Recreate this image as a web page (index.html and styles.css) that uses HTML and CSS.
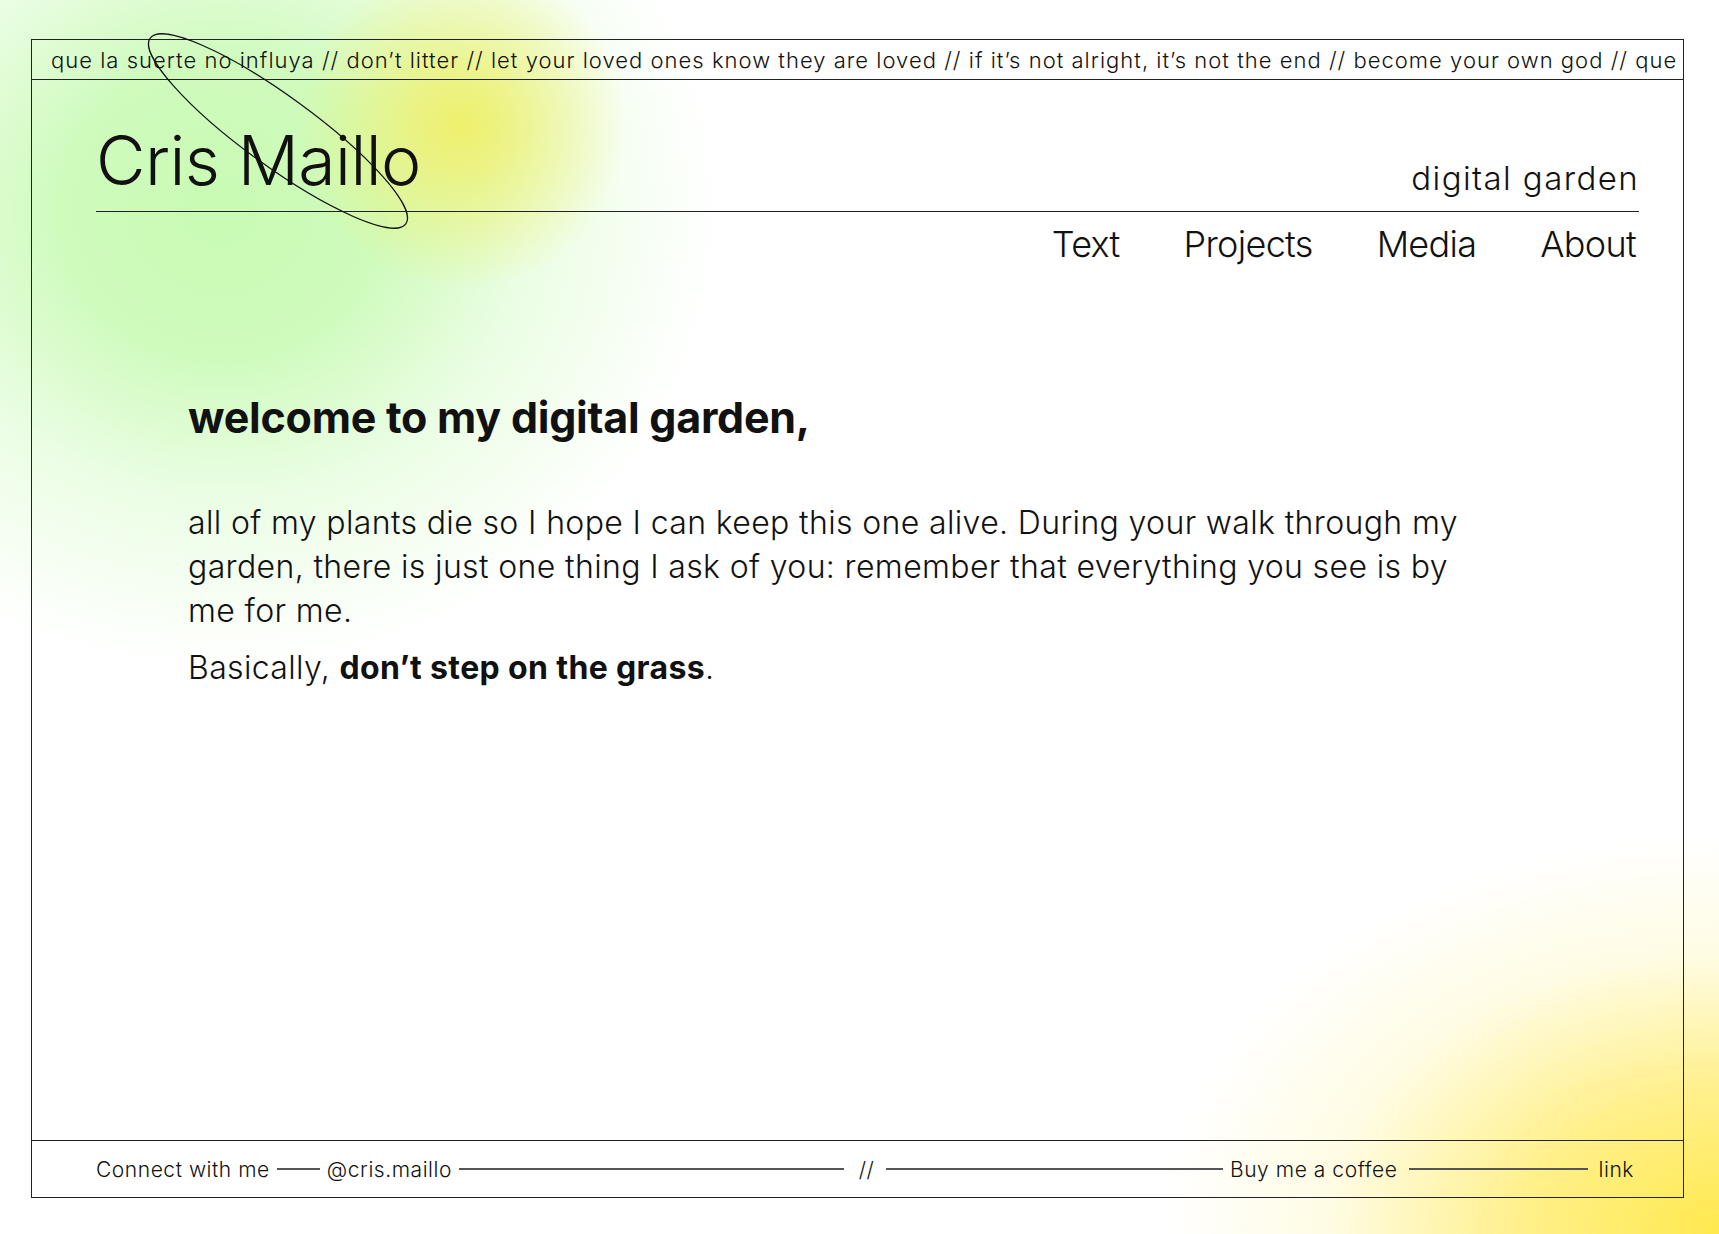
FILE: index.html
```html
<!DOCTYPE html>
<html lang="en">
<head>
<meta charset="utf-8">
<title>Cris Maillo — digital garden</title>
<link rel="stylesheet" href="styles.css">
</head>
<body>
<div class="frame">
  <div class="ticker"><span>que la suerte no influya // don’t litter // let your loved ones know they are loved // if it’s not alright, it’s not the end // become your own god // que</span></div>
  <main class="main">
    <header class="header">
      <div class="brand-row">
        <h1 class="name">Cris Maillo</h1>
        <div class="tag">digital garden</div>
      </div>
      <nav class="nav">
        <a href="#">Text</a>
        <a href="#">Projects</a>
        <a href="#">Media</a>
        <a href="#">About</a>
      </nav>
    </header>
    <section class="intro">
      <h2 class="welcome">welcome to my digital garden,</h2>
      <p class="text">all of my plants die so I hope I can keep this one alive. During your walk through my garden, there is just one thing I ask of you: remember that everything you see is by me for me.</p>
      <p class="text basically">Basically, <strong>don’t step on the grass</strong>.</p>
    </section>
  </main>
  <footer class="footer">
    <div class="group">
      <span>Connect with me</span>
      <span class="rule short"></span>
      <span>@cris.maillo</span>
      <span class="rule grow"></span>
    </div>
    <span class="sep">//</span>
    <div class="group">
      <span class="rule grow"></span>
      <span>Buy me a coffee</span>
      <span class="rule fixed"></span>
      <span>link</span>
    </div>
  </footer>
  <svg class="orbit" width="360" height="240" viewBox="0 0 360 240" aria-hidden="true">
    <ellipse cx="180" cy="120" rx="158" ry="35" transform="rotate(36 180 120)" fill="none" stroke="#111" stroke-width="1.2"/>
  </svg>
</div>
</body>
</html>
```

FILE: styles.css
```css
html, body {
  height: 100%;
  margin: 0;
}

body {
  font-family: Inter, "Liberation Sans", sans-serif;
  font-weight: 300;
  color: #111;
  background:
    radial-gradient(circle at 462px 125px, rgba(238, 240, 108, 1) 0, rgba(238, 240, 108, 0.75) 50px, rgba(240, 244, 130, 0) 165px),
    radial-gradient(ellipse 500px 460px at 220px 210px, #c9fbb4 0%, #cffbbd 32%, rgba(226, 253, 216, 0.7) 62%, rgba(255, 255, 255, 0) 100%),
    radial-gradient(ellipse 560px 400px at 100% 100%, #ffe94e 0%, #fff08a 35%, rgba(255, 250, 210, 0.6) 70%, rgba(255, 255, 255, 0) 100%),
    #fff;
  overflow: hidden;
}

.frame {
  position: relative;
  box-sizing: border-box;
  margin: 39px 35px 0 31px;
  height: 1159px;
  border: 1.5px solid #222;
  display: flex;
  flex-direction: column;
}

.ticker {
  height: 40px;
  border-bottom: 1.5px solid #222;
  box-sizing: border-box;
  display: flex;
  align-items: center;
  padding-left: 19px;
  white-space: nowrap;
  overflow: hidden;
  font-size: 22px;
  letter-spacing: 1.02px;
}

.main {
  flex: 1;
  display: flex;
  flex-direction: column;
}

.header {
  padding: 46px 44px 0 64px;
}

.brand-row {
  display: flex;
  justify-content: space-between;
  align-items: flex-end;
  border-bottom: 1.2px solid #222;
  padding-bottom: 17px;
}

.name {
  margin: 0;
  font-size: 68px;
  font-weight: 300;
  letter-spacing: -0.6px;
  line-height: 1;
}

.tag {
  font-size: 33px;
  line-height: 1;
  margin-bottom: -1px;
  letter-spacing: 1.4px;
}

.nav {
  display: flex;
  justify-content: flex-end;
  gap: 64px;
  padding: 14px 3px 0 0;
}

.nav a {
  color: #111;
  text-decoration: none;
  font-size: 36px;
  letter-spacing: -0.7px;
  line-height: 1;
}

.intro {
  padding: 134px 0 0 156px;
}

.welcome {
  margin: 0;
  font-size: 43px;
  font-weight: 700;
  letter-spacing: -0.25px;
  line-height: 1;
}

.text {
  margin: 62px 0 0;
  max-width: 1290px;
  font-size: 32px;
  line-height: 44px;
  letter-spacing: 0.36px;
}

.basically {
  margin-top: 13px;
}

.basically strong {
  font-weight: 700;
}

.footer {
  height: 57px;
  border-top: 1.5px solid #222;
  box-sizing: border-box;
  display: flex;
  align-items: center;
  padding: 0 49px 0 64px;
  font-size: 21px;
  letter-spacing: 0.55px;
}

.group {
  flex: 1;
  display: flex;
  align-items: center;
  gap: 7px;
}

.sep {
  margin: 0 12px 0 15px;
}

.rule {
  height: 1.5px;
  background: #555;
}

.rule.short {
  width: 43px;
}

.rule.grow {
  flex: 1;
}

.rule.fixed {
  width: 179px;
  margin: 0 4px;
}

.orbit {
  position: absolute;
  left: 66px;
  top: -29px;
  pointer-events: none;
}
```
